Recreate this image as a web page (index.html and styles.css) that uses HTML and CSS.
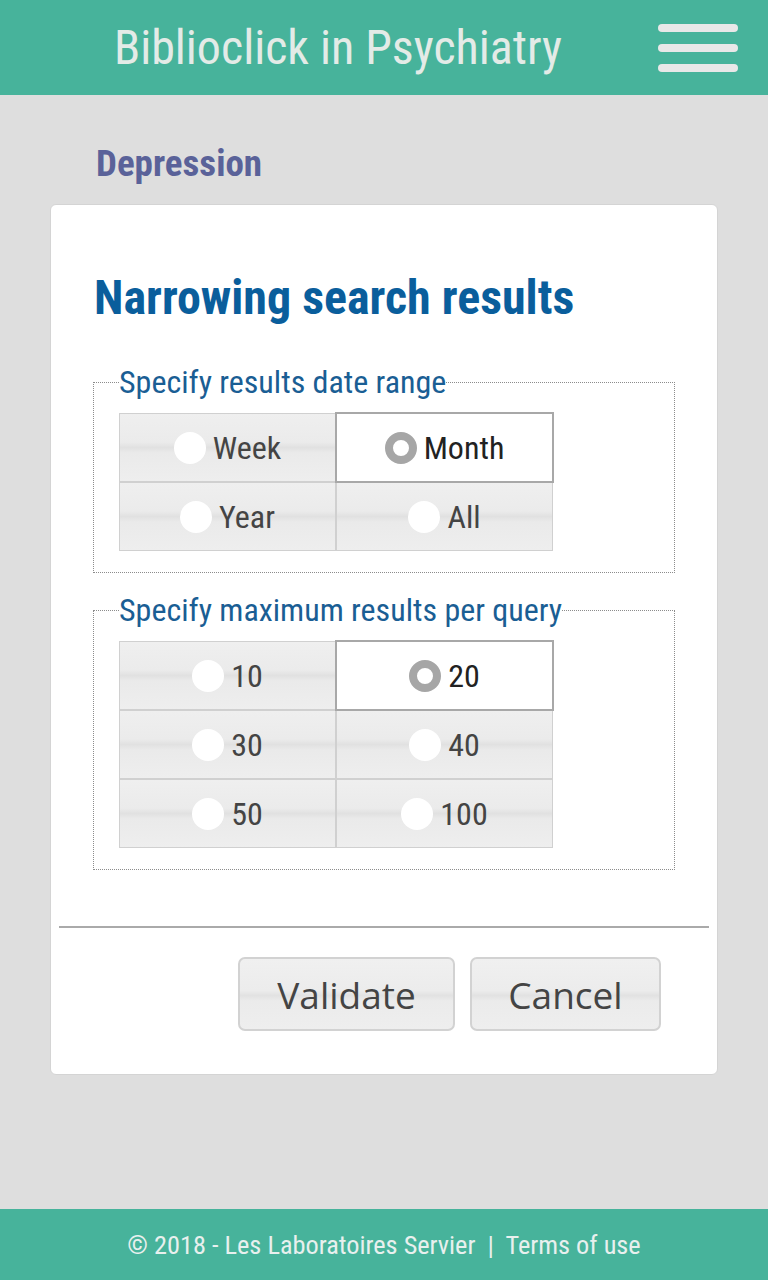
FILE: index.html
```html
<!DOCTYPE html>
<html lang="en">
<head>
    <meta charset="UTF-8">
    <meta name="viewport" content="width=device-width, initial-scale=1.0">
    <title>Biblioclick in Psychiatry</title>
    <link rel="stylesheet" href="styles.css">
</head>
<body>

    <header class="topbar">
        <h1 class="app-title">Biblioclick in Psychiatry</h1>
        <button class="menu-btn" type="button" aria-label="Menu">
            <span></span><span></span><span></span>
        </button>
    </header>

    <main class="page">
        <h2 class="topic">Depression</h2>

        <div class="card">
            <h3 class="card-title">Narrowing search results</h3>

            <fieldset class="group">
                <legend>Specify results date range</legend>
                <div class="choices">
                    <label class="choice"><span class="dot"></span>Week</label>
                    <label class="choice selected"><span class="dot"></span>Month</label>
                    <label class="choice"><span class="dot"></span>Year</label>
                    <label class="choice"><span class="dot"></span>All</label>
                </div>
            </fieldset>

            <fieldset class="group">
                <legend>Specify maximum results per query</legend>
                <div class="choices">
                    <label class="choice"><span class="dot"></span>10</label>
                    <label class="choice selected"><span class="dot"></span>20</label>
                    <label class="choice"><span class="dot"></span>30</label>
                    <label class="choice"><span class="dot"></span>40</label>
                    <label class="choice"><span class="dot"></span>50</label>
                    <label class="choice"><span class="dot"></span>100</label>
                </div>
            </fieldset>

            <hr class="sep">

            <div class="actions">
                <button type="button" class="btn">Validate</button>
                <button type="button" class="btn">Cancel</button>
            </div>
        </div>
    </main>

    <footer class="bottombar">
        © 2018 - Les Laboratoires Servier &nbsp;|&nbsp; Terms of use
    </footer>

</body>
</html>
```

FILE: styles.css
```css
* {
    margin: 0;
    padding: 0;
    box-sizing: border-box;
}

body {
    font-family: "Roboto Condensed", Roboto, "Liberation Sans", sans-serif;
    font-stretch: condensed;
    background-color: #dedede;
    min-height: 100vh;
    display: flex;
    flex-direction: column;
}

.topbar {
    height: 95px;
    background-color: #47b39b;
    display: flex;
    align-items: center;
    justify-content: center;
    position: relative;
}

.app-title {
    font-size: 48px;
    font-weight: 400;
    color: #e3ebe7;
    margin-left: -92px;
}

.menu-btn {
    position: absolute;
    right: 30px;
    top: 24px;
    width: 80px;
    background: none;
    border: none;
    display: flex;
    flex-direction: column;
    gap: 12px;
}

.menu-btn span {
    display: block;
    height: 8px;
    border-radius: 4px;
    background-color: #e8e8e8;
}

.page {
    flex: 1;
    padding: 0 50px 133px;
}

.topic {
    font-size: 37px;
    font-weight: 700;
    color: #5a6299;
    margin: 47px 0 0 46px;
    line-height: 44px;
}

.card {
    margin-top: 18px;
    background-color: #fff;
    border: 1px solid #d4d4d4;
    border-radius: 6px;
    padding: 65px 42px 43px;
}

.card-title {
    font-size: 48px;
    font-weight: 700;
    color: #0a5e9c;
    line-height: 56px;
    margin-left: 1px;
    margin-bottom: 38px;
}

.group {
    border: 1px dotted #8c8c8c;
    padding: 0 24px 21px 25px;
}

.group + .group {
    margin-top: 19px;
}

.group legend {
    font-size: 32px;
    color: #1a5e94;
    line-height: 36px;
    padding: 0;
    margin-bottom: 13px;
}

.choices {
    display: grid;
    grid-template-columns: 215px 215px;
    grid-auto-rows: 67px;
    gap: 2px;
    padding: 1px;
    width: 434px;
    background-color: #d0d0d0;
}

.choice {
    display: flex;
    align-items: center;
    justify-content: center;
    gap: 7px;
    font-size: 32px;
    color: #444;
    background: linear-gradient(#efefef 0%, #ebebeb 42%, #e1e1e1 50%, #eaeaea 58%, #eeeeee 100%);
}

.choice.selected {
    background: #fff;
    color: #222;
    outline: 2px solid #a8a8a8;
    z-index: 1;
}

.dot {
    width: 32px;
    height: 32px;
    border-radius: 50%;
    background-color: #fff;
}

.choice.selected .dot {
    border: 8px solid #a6a6a6;
}

.sep {
    border: none;
    border-top: 2px solid #aaa;
    margin: 56px -34px 29px;
}

.actions {
    display: flex;
    justify-content: flex-end;
    gap: 15px;
    padding-right: 14px;
}

.btn {
    font-family: "Open Sans", "DejaVu Sans", sans-serif;
    font-stretch: normal;
    font-size: 37px;
    color: #444;
    height: 74px;
    padding: 0;
    border: 2px solid #d2d2d2;
    border-radius: 7px;
    background: linear-gradient(#f0f0f0 0%, #ececec 45%, #e2e2e2 52%, #ebebeb 60%, #eeeeee 100%);
}

.btn:first-child {
    width: 217px;
}

.btn:last-child {
    width: 191px;
}

.bottombar {
    height: 71px;
    background-color: #47b39b;
    color: #e8f0ee;
    font-size: 26.3px;
    display: flex;
    align-items: center;
    justify-content: center;
}
```
